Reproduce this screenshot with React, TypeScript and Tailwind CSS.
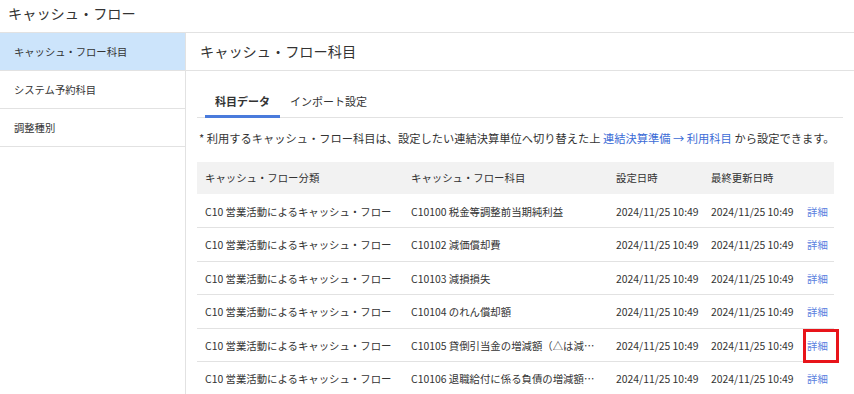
const rows = [
  { cat: 'C10 営業活動によるキャッシュ・フロー', item: 'C10100 税金等調整前当期純利益' },
  { cat: 'C10 営業活動によるキャッシュ・フロー', item: 'C10102 減価償却費' },
  { cat: 'C10 営業活動によるキャッシュ・フロー', item: 'C10103 減損損失' },
  { cat: 'C10 営業活動によるキャッシュ・フロー', item: 'C10104 のれん償却額' },
  { cat: 'C10 営業活動によるキャッシュ・フロー', item: 'C10105 貸倒引当金の増減額（△は減少）', marked: true },
  { cat: 'C10 営業活動によるキャッシュ・フロー', item: 'C10106 退職給付に係る負債の増減額（△は減少）' },
]

const menu = ['キャッシュ・フロー科目', 'システム予約科目', '調整種別']

const App = () => {
  return (
    <div className="h-[394px] w-[854px] overflow-hidden bg-white text-[#333] font-['Noto_Sans_CJK_JP','Noto_Sans',sans-serif]">
      <header className="h-[33px] border-b border-[#e2e2e2] px-2 pb-[5px] flex items-center text-[14.2px] leading-none">
        キャッシュ・フロー
      </header>
      <div className="flex h-[361px]">
        <nav className="w-[186px] shrink-0 border-r border-[#e2e2e2]">
          {menu.map((m, i) => (
            <div
              key={m}
              className={`h-[38px] flex items-center pl-[14px] text-[10.3px] border-b border-[#e2e2e2] ${i === 0 ? 'bg-[#cce4fb]' : ''}`}
            >
              {m}
            </div>
          ))}
        </nav>
        <main className="flex-1 min-w-0">
          <div className="h-[38px] border-b border-[#e2e2e2] flex items-center pl-[14px] text-[14.2px]">
            キャッシュ・フロー科目
          </div>
          <div className="px-[11px]">
            <div className="mt-[16px] flex border-b border-[#e2e2e2] h-[31px] text-[11px] whitespace-nowrap">
              <div className="ml-[8px] w-[75px] flex items-center justify-center font-bold border-b-[3px] border-[#4a7bdc] -mb-px">
                科目データ
              </div>
              <div className="pl-[10px] flex items-center pb-[2px]">インポート設定</div>
            </div>
            <p className="mt-[12px] text-[11.25px] leading-[16px] whitespace-nowrap pl-[2px]">
              * 利用するキャッシュ・フロー科目は、設定したい連結決算単位へ切り替えた上{' '}
              <span className="text-[#3b6bd6]">連結決算準備 → 利用科目</span> から設定できます。
            </p>
            <table className="mt-[16px] w-[637px] table-fixed border-collapse text-[10.4px]">
              <colgroup>
                <col className="w-[206px]" />
                <col className="w-[205px]" />
                <col className="w-[95px]" />
                <col className="w-[96px]" />
                <col className="w-[35px]" />
              </colgroup>
              <thead>
                <tr className="bg-[#f2f2f2] h-[32px]">
                  <th className="text-left font-normal pl-[8px]">キャッシュ・フロー分類</th>
                  <th className="text-left font-normal pl-[8px]">キャッシュ・フロー科目</th>
                  <th className="text-left font-normal pl-[8px]">設定日時</th>
                  <th className="text-left font-normal pl-[8px]">最終更新日時</th>
                  <th />
                </tr>
              </thead>
              <tbody>
                {rows.map((r, i) => (
                  <tr key={i} className="h-[33.5px] border-b border-[#e2e2e2]">
                    <td className="pl-[8px] pt-[2px] whitespace-nowrap overflow-hidden">{r.cat}</td>
                    <td className="pl-[8px] pr-[10px] pt-[2px] whitespace-nowrap overflow-hidden text-ellipsis">{r.item}</td>
                    <td className="pl-[8px] pt-[2px] whitespace-nowrap">2024/11/25 10:49</td>
                    <td className="pl-[8px] pt-[2px] whitespace-nowrap">2024/11/25 10:49</td>
                    <td className="pl-[8px] pt-[2px] relative">
                      <span className="text-[#5a7fe0]">詳細</span>
                      {r.marked && (
                        <div className="absolute left-[4px] top-0 w-[36px] h-[34px] border-[3px] border-[#e8141a]" />
                      )}
                    </td>
                  </tr>
                ))}
              </tbody>
            </table>
          </div>
        </main>
      </div>
    </div>
  )
}

export default App
